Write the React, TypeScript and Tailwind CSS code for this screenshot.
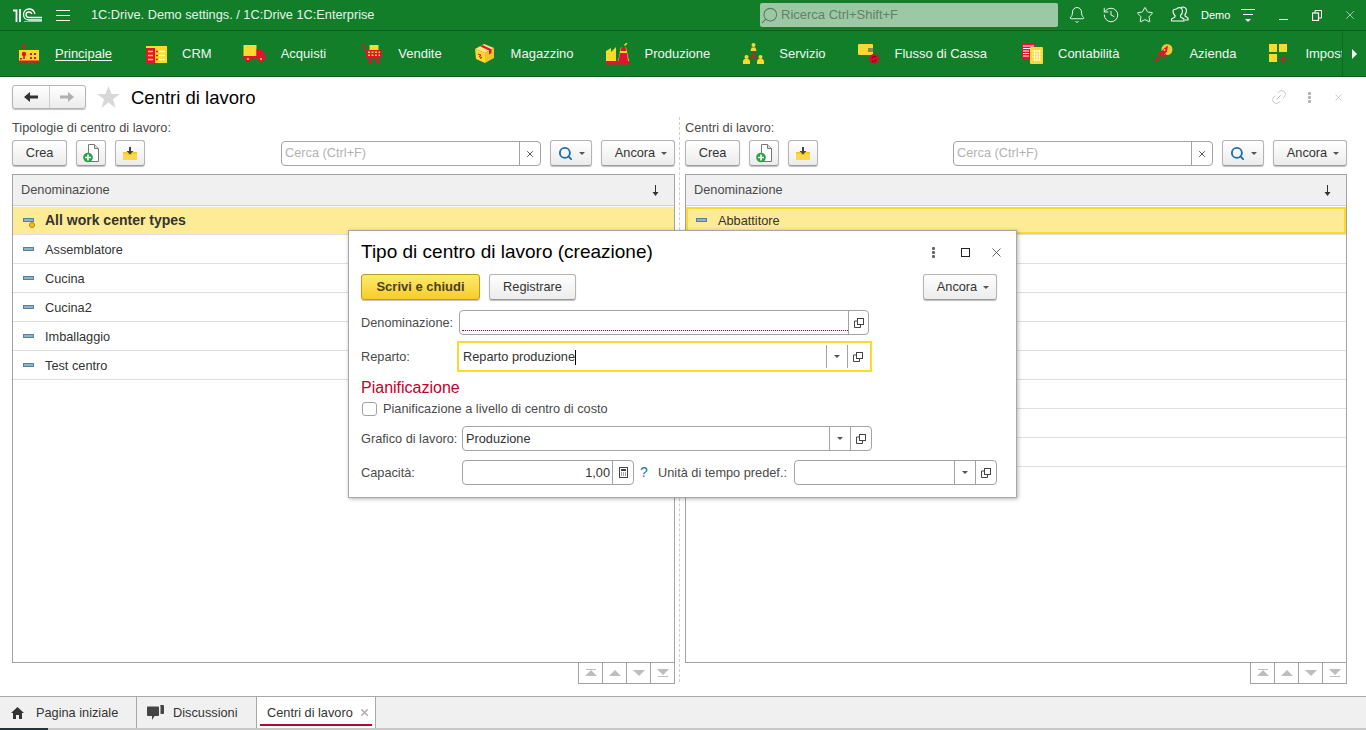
import type { ReactNode } from 'react'
import { Bell, History, Star, Link2, Search, X } from 'lucide-react'

const Y = '#fbd92d'
const R = '#e3122f'

const IconPrincipale = () => (
  <svg width="20" height="19" viewBox="0 0 20 19">
    <rect x="4.500" y="2" width="1" height="5" fill={R} />
    <circle cx="5" cy="1.500" r="1.500" fill={R} />
    <rect x="0" y="6" width="20" height="11" fill={Y} />
    <rect x="0" y="16.500" width="20" height="2" fill={R} />
    <circle cx="5" cy="10" r="2.200" fill={R} />
    <rect x="4.200" y="11" width="1.600" height="4" fill={R} />
    <rect x="1" y="14" width="2" height="1.500" fill={R} />
    <path d="M11 9h2v2h-2zM15 9h2v2h-2zM11 13h2v2h-2zM15 13h2v2h-2z" fill={R} />
  </svg>
)
const IconCrm = () => (
  <svg width="21" height="18" viewBox="0 0 21 18">
    <rect x="0" y="0" width="21" height="3" fill={Y} />
    <path d="M0 0h21v1H0z" fill={R} />
    <rect x="0" y="3" width="9" height="15" fill={R} />
    <rect x="9" y="3" width="12" height="15" fill={Y} />
    <path d="M2 6.500h5M2 10.500h5M2 14.500h5" stroke={Y} strokeWidth="1.500" />
    <path d="M10 6.500h2M10 10.500h2M10 14.500h2" stroke={R} strokeWidth="1.500" />
    <path d="M13 6.500h6M13 10.500h6M13 14.500h6" stroke="#fff" strokeWidth="1.300" />
  </svg>
)
const IconAcquisti = () => (
  <svg width="23" height="17" viewBox="0 0 23 17">
    <rect x="0.500" y="0" width="13" height="11" fill={Y} />
    <path d="M13.500 4h4l4.500 5v3h-8.500z" fill={R} />
    <rect x="0" y="11" width="23" height="2.500" fill={R} />
    <circle cx="5" cy="14" r="3" fill={R} /><circle cx="5" cy="14" r="1.100" fill={Y} />
    <circle cx="18" cy="14" r="3" fill={R} /><circle cx="18" cy="14" r="1.100" fill={Y} />
  </svg>
)
const IconVendite = () => (
  <svg width="20" height="19" viewBox="0 0 20 19">
    <rect x="7.500" y="1" width="9" height="6" fill={Y} />
    <path d="M0 0l2 .5L5.500 14h12" fill="none" stroke={R} strokeWidth="1.200" />
    <rect x="4" y="6" width="15.500" height="7" fill={R} />
    <path d="M6 7.500h2v1.500H6zM9.500 7.500h2v1.500h-2zM13 7.500h2v1.500h-2zM16.500 7.500h1.500v1.500H16.500zM6 10.500h2V12H6zM9.500 10.500h2V12h-2zM13 10.500h2V12h-2zM16.500 10.500h1.500V12H16.500z" fill={Y} />
    <circle cx="8" cy="17" r="2" fill={R} /><circle cx="15.500" cy="17" r="2" fill={R} />
  </svg>
)
const IconMagazzino = () => (
  <svg width="19" height="19" viewBox="0 0 19 19">
    <path d="M0 5l9-5 10 4-9 5z" fill="#fde47a" />
    <path d="M0 5l10 4v10L1 15z" fill={Y} />
    <path d="M10 9l9-5v10l-9 5z" fill="#eec529" />
    <path d="M5 2.200l9 4.300v4l2.500-1.500V5.200L7.500 1z" fill={R} />
    <path d="M3 10l3 1-2 1.500 3 1-2 1" stroke={R} strokeWidth="1" fill="none" />
  </svg>
)
const IconProduzione = () => (
  <svg width="24" height="22" viewBox="0 0 24 22">
    <path d="M0 18V8l5-3v4l5-5v14z" fill={Y} />
    <path d="M21 0l-2.500 2.500" stroke={Y} strokeWidth="1.500" />
    <path d="M15 4h5l3 14h-11z" fill={Y} />
    <path d="M15.500 4h4l.8 4h-5.600zM14 10h7l1 8H12.500z" fill={R} />
    <rect x="0" y="19" width="24" height="2.500" fill={R} />
  </svg>
)
const IconServizio = () => (
  <svg width="21" height="21" viewBox="0 0 21 21">
    <circle cx="10.500" cy="2" r="2" fill={Y} /><path d="M7.500 8l1-3.500h4l1 3.500z" fill={Y} />
    <circle cx="3.500" cy="14" r="2" fill={Y} /><path d="M0 21v-3.500l1.500-1.500h4l1.500 1.500V21z" fill={Y} />
    <circle cx="17.500" cy="14" r="2" fill={Y} /><path d="M14 21v-3.500l1.500-1.500h4l1.500 1.500V21z" fill={Y} />
    <path d="M10.500 9v4M10.500 13l-3.500 3M10.500 13l3.500 3" stroke={R} strokeWidth="1.300" />
  </svg>
)
const IconFlusso = () => (
  <svg width="21" height="20" viewBox="0 0 21 20">
    <rect x="0" y="0" width="15" height="11" rx="1" fill={Y} />
    <rect x="10" y="4" width="5" height="4" fill="#8b8a4a" />
    <circle cx="16" cy="15" r="5" fill="#d60f2c" />
    <path d="M14 15a2.500 2.500 0 0 1 4-2M18 15a2.500 2.500 0 0 1-4 2" stroke="#7d0a1c" strokeWidth="1.200" fill="none" />
  </svg>
)
const IconConta = () => (
  <svg width="21" height="21" viewBox="0 0 21 21">
    <rect x="0" y="0" width="13" height="16" fill={R} />
    <path d="M1 3h11M1 5.500h11M1 8h6M1 10.500h6M1 13h6" stroke="#fff" strokeWidth="1" />
    <rect x="8" y="4" width="13" height="17" rx="1" fill={Y} />
    <path d="M10 8h9M10 11h9M10 14h9M10 17h9M12.500 7v11M15 7v11M17.500 7v11" stroke="#fff" strokeWidth=".8" />
  </svg>
)
const IconAzienda = () => (
  <svg width="19" height="19" viewBox="0 0 19 19">
    <circle cx="13" cy="5.500" r="5.500" fill="#f2c735" />
    <path d="M14 1.500l-1 6-5 5.500-3-3 5-5.500z" fill={R} />
    <path d="M4 7h4l-3.500 4zM12 9v3.500L8 16zM3.500 12l2.500 2.500L0 19z" fill={R} />
    <circle cx="10.500" cy="6" r="1" fill={Y} />
  </svg>
)
const IconImpost = () => (
  <svg width="20" height="20" viewBox="0 0 20 20">
    <rect x="0" y="0" width="8" height="8" fill={Y} />
    <rect x="10" y="0" width="8" height="8" fill={Y} />
    <rect x="0" y="10" width="8" height="8" fill={Y} />
    <path d="M14 11v9M10 15.500h9" stroke={R} strokeWidth="1.300" />
  </svg>
)

const Logo1C = () => (
  <svg width="29" height="14" viewBox="0 0 29 14" fill="none" stroke="#fff">
    <path d="M0 2.500h3.500V14" strokeWidth="1.800" />
    <path d="M7 1V14" strokeWidth="1.800" />
    <path d="M22 6C21.200 3 19 1 16 1c-3.500 0-5.500 2.700-5.500 5.500 0 3 2.200 5.500 5.500 5.500h13" strokeWidth="1.300" />
    <path d="M19 6c-.5-1.200-1.700-2-3-2-1.800 0-3 1.200-3 2.700 0 1.500 1.300 2.800 3 2.800h13" strokeWidth="1.300" />
    <path d="M29 13.800H11" strokeWidth=".8" />
  </svg>
)

const menu: { label: string; icon: ReactNode; gap: string; active?: boolean }[] = [
  { label: 'Principale', icon: <IconPrincipale />, gap: 'mr-[32px]', active: true },
  { label: 'CRM', icon: <IconCrm />, gap: 'mr-[31px]' },
  { label: 'Acquisti', icon: <IconAcquisti />, gap: 'mr-[34px]' },
  { label: 'Vendite', icon: <IconVendite />, gap: 'mr-[31px]' },
  { label: 'Magazzino', icon: <IconMagazzino />, gap: 'mr-[33px]' },
  { label: 'Produzione', icon: <IconProduzione />, gap: 'mr-[31px]' },
  { label: 'Servizio', icon: <IconServizio />, gap: 'mr-[31px]' },
  { label: 'Flusso di Cassa', icon: <IconFlusso />, gap: 'mr-[33px]' },
  { label: 'Contabilità', icon: <IconConta />, gap: 'mr-[32px]' },
  { label: 'Azienda', icon: <IconAzienda />, gap: 'mr-[31px]' },
  { label: 'Impostazioni', icon: <IconImpost />, gap: '' },
]

const Caret = ({ className = '' }: { className?: string }) => (
  <span className={`inline-block w-0 h-0 border-x-[3px] border-x-transparent border-t-[3px] border-t-[#555] ${className}`} />
)

const OpenIcon = () => (
  <svg width="10" height="10" viewBox="0 0 10 10" fill="none" stroke="#444">
    <path d="M3 3H.5v6.500h6V7" />
    <rect x="3.500" y=".5" width="6" height="6" />
  </svg>
)

const Btn = ({ className = '', children }: { className?: string; children: ReactNode }) => (
  <div className={`flex items-center justify-center h-[26px] rounded-[3px] border border-[#b4b4b4] border-b-[#999] bg-gradient-to-b from-white to-[#ececec] shadow-[0_1px_1px_rgba(0,0,0,0.25)] text-[#333] ${className}`}>
    {children}
  </div>
)

const Field = ({ className = '', children }: { className?: string; children?: ReactNode }) => (
  <div className={`flex items-stretch h-[25px] rounded-[4px] border border-[#a3a3a3] bg-white ${className}`}>{children}</div>
)

const Side = ({ children, w = 'w-[21px]' }: { children: ReactNode; w?: string }) => (
  <div className={`flex items-center justify-center ${w} shrink-0 border-l border-[#a3a3a3]`}>{children}</div>
)

const AddIcon = () => (
  <svg width="17" height="19" viewBox="0 0 17 19">
    <path d="M5.500 .5h6l4 4v13h-10z" fill="#fff" stroke="#777" />
    <path d="M11.500 .5v4h4" fill="#ddd" stroke="#777" />
    <circle cx="5" cy="13.500" r="4.800" fill="#27a243" />
    <path d="M5 10.500v6M2 13.500h6" stroke="#fff" strokeWidth="1.600" />
  </svg>
)
const LoadIcon = () => (
  <svg width="14" height="13" viewBox="0 0 14 13">
    <rect x="0" y="5" width="14" height="8" fill="#fbd94a" />
    <path d="M0 5h4l1 3h4l1-3h4v1.500H0z" fill="#f0c419" />
    <path d="M7 0v4" stroke="#444" strokeWidth="2" />
    <path d="M3.500 4h7L7 7.500z" fill="#444" />
  </svg>
)

const ScrollIcon = ({ kind }: { kind: 'first' | 'up' | 'down' | 'last' }) => (
  <svg width="14" height="8" viewBox="0 0 14 8" fill="#bdbdbd">
    {kind === 'first' && <path d="M2 0h10v1H2zM7 1l6 6H1z" />}
    {kind === 'up' && <path d="M7 1l6 6H1z" />}
    {kind === 'down' && <path d="M1 1h12L7 7z" />}
    {kind === 'last' && <path d="M1 0h12L7 6zM2 7h10v1H2z" />}
  </svg>
)

const SortArrow = () => (
  <svg width="7" height="11" viewBox="0 0 7 11" fill="#333">
    <rect x="3" y="0" width="1" height="8" />
    <path d="M.5 7h6L3.500 11z" />
  </svg>
)

const RowIcon = ({ mark }: { mark?: boolean }) => (
  <span className="relative block w-[11px] h-[10px] shrink-0">
    <span className="absolute left-0 top-[2px] w-[11px] h-[4px] bg-[#8db4cf] border border-[#5b7f98]" />
    {mark && <span className="absolute left-[6px] top-[6px] w-[6px] h-[6px] rounded-full bg-[#f1c21b] border border-[#a98a10]" />}
  </span>
)

const Panel = ({ title, className, rows, boxed, bold }: { title: string; className: string; rows: string[]; boxed?: boolean; bold?: boolean }) => (
  <div className={`flex flex-col shrink-0 ${className}`}>
    <div className="h-[14px] mt-[12px] leading-[14px] text-[#4a4a4a]">{title}</div>
    <div className="flex items-start mt-[5px] h-[26px]">
      <Btn className="w-[55px]">Crea</Btn>
      <Btn className="w-[30px] ml-[9px]"><AddIcon /></Btn>
      <Btn className="w-[30px] ml-[9px]"><LoadIcon /></Btn>
      <Field className="w-[260px] ml-auto mt-[1px]">
        <div className="flex-1 px-[3px] leading-[22px] text-[#b3b3b3]">Cerca (Ctrl+F)</div>
        <Side><X size={10} color="#555" strokeWidth={2.4} /></Side>
      </Field>
      <Btn className="w-[42px] ml-[9px] gap-[6px]">
        <Search size={15} color="#1f6fa8" strokeWidth={3} />
        <Caret />
      </Btn>
      <Btn className="w-[74px] ml-[9px] gap-[6px] pl-[6px]">Ancora <Caret /></Btn>
    </div>
    <div className="mt-[8px] h-[489px] border border-[#a3a3a3] bg-white flex flex-col">
      <div className="flex items-center justify-between h-[31px] shrink-0 bg-[#f0f0f0] border-b border-[#d0d0d0] pl-[8px] pr-[15px] text-[#4a4a4a]">
        <span>Denominazione</span>
        <SortArrow />
      </div>
      <div className="h-[28px] shrink-0 mt-[1px] border-b border-[#dedede]">
        <div className={`flex items-center h-[27px] bg-[#feeb95] gap-[11px] text-[#333] ${boxed ? 'border-2 border-[#fbd92d] pl-[8px]' : 'pl-[10px]'} ${bold ? 'font-bold text-[14px]' : ''}`}>
          <RowIcon mark={bold} />
          <span>{rows[0]}</span>
        </div>
      </div>
      {rows.slice(1).map((row, i) => (
        <div key={i} className="flex items-center h-[29px] shrink-0 border-b border-[#dedede] pl-[10px] pt-[1px] gap-[11px] text-[#333]">
          <RowIcon />
          <span>{row}</span>
        </div>
      ))}
    </div>
    <div className="flex justify-end h-[22px]">
      {(['first', 'up', 'down', 'last'] as const).map((kind) => (
        <div key={kind} className="flex items-center justify-center w-[24px] last:w-[25px] h-[21px] border-b border-l last:border-r border-[#a3a3a3]">
          <ScrollIcon kind={kind} />
        </div>
      ))}
    </div>
  </div>
)

const Dots = ({ color }: { color: string }) => (
  <svg width="3" height="11" viewBox="0 0 3 11" fill={color}>
    <rect width="3" height="3" rx="1" /><rect y="4" width="3" height="3" rx="1" /><rect y="8" width="3" height="3" rx="1" />
  </svg>
)

const CalcIcon = () => (
  <svg width="9" height="11" viewBox="0 0 9 11">
    <rect x=".5" y=".5" width="8" height="10" fill="none" stroke="#444" />
    <rect x="2" y="2" width="5" height="2" fill="#444" />
    <path d="M2 5.500h1v1H2zM4 5.500h1v1H4zM6 5.500h1v1H6zM2 7.500h1v1H2zM4 7.500h1v1H4zM6 7.500h1v1H6z" fill="#444" />
  </svg>
)

const Dialog = () => (
  <div className="absolute left-[348px] top-[230px] w-[669px] h-[268px] bg-white border border-[#a8a8a8] shadow-[1px_1px_4px_rgba(0,0,0,0.3)] pl-[12px] pr-[19px] z-10">
    <div className="flex items-center h-[42px]">
      <span className="text-[19px] text-black flex-1">Tipo di centro di lavoro (creazione)</span>
      <Dots color="#666" />
      <span className="block w-[9px] h-[9px] border border-[#222] ml-[26px]" />
      <X size={15} color="#333" strokeWidth={1.2} className="ml-[19px] mr-[-7px]" />
    </div>
    <div className="flex items-center h-[26px] mt-[1px]">
      <div className="flex items-center justify-center w-[119px] h-[26px] rounded-[3px] border border-[#bd9c1a] bg-gradient-to-b from-[#fdea6b] to-[#f7cd1e] shadow-[0_1px_1px_rgba(0,0,0,0.25)] text-[13px] font-bold text-[#4a4320]">Scrivi e chiudi</div>
      <Btn className="w-[87px] ml-[9px] text-[#4a4a4a]">Registrare</Btn>
      <Btn className="w-[74px] ml-auto gap-[6px] pl-[6px]">Ancora <Caret /></Btn>
    </div>
    <div className="flex items-center h-[25px] mt-[10px]">
      <span className="w-[98px] whitespace-nowrap text-[#4a4a4a]">Denominazione:</span>
      <Field className="w-[410px]">
        <div className="flex-1 relative"><span className="absolute left-[2px] right-0 bottom-[3px] border-b border-dotted border-[#c00000]" /></div>
        <Side w="w-[20px]"><OpenIcon /></Side>
      </Field>
    </div>
    <div className="flex items-center h-[31px] mt-[6px]">
      <span className="w-[96px] text-[#4a4a4a]">Reparto:</span>
      <div className="flex items-center w-[415px] h-[31px] border-2 border-[#fbd92d] bg-white pr-[2px]">
        <span className="flex-1 pl-[4px] text-[#333]">Reparto produzione<span className="inline-block w-px h-[15px] bg-black align-middle" /></span>
        <div className="flex items-center justify-center w-[21px] h-[23px] border-l border-[#a3a3a3]"><Caret /></div>
        <div className="flex items-center justify-center w-[21px] h-[23px] border-l border-[#a3a3a3]"><OpenIcon /></div>
      </div>
    </div>
    <div className="h-[20px] leading-[20px] mt-[6px] text-[16px] text-[#c2002b]">Pianificazione</div>
    <div className="flex items-center h-[16px] mt-[3px]">
      <span className="block w-[15px] h-[14px] rounded-[3px] border border-[#a3a3a3] bg-white ml-[1px]" />
      <span className="ml-[6px] text-[#4a4a4a]">Pianificazione a livello di centro di costo</span>
    </div>
    <div className="flex items-center h-[25px] mt-[9px]">
      <span className="w-[101px] whitespace-nowrap text-[#4a4a4a]">Grafico di lavoro:</span>
      <Field className="w-[410px]">
        <span className="flex-1 pl-[3px] leading-[23px] text-[#333]">Produzione</span>
        <Side><Caret /></Side>
        <Side><OpenIcon /></Side>
      </Field>
    </div>
    <div className="flex items-center h-[25px] mt-[9px]">
      <span className="w-[101px] text-[#4a4a4a]">Capacità:</span>
      <Field className="w-[172px]">
        <span className="flex-1 pr-[2px] text-right leading-[23px] text-[#333]">1,00</span>
        <Side><CalcIcon /></Side>
      </Field>
      <span className="w-[24px] pl-[6px] text-[14px] text-[#1f6fa8]">?</span>
      <span className="w-[136px] whitespace-nowrap text-[#4a4a4a]">Unità di tempo predef.:</span>
      <Field className="w-[203px]">
        <span className="flex-1" />
        <Side><Caret /></Side>
        <Side><OpenIcon /></Side>
      </Field>
    </div>
  </div>
)

const UsersIcon = () => (
  <svg width="20" height="18" viewBox="0 0 20 18" fill="none" stroke="#fff" strokeWidth="1.100">
    <path d="M7.500 3c2-2.500 6-1.500 6 2 0 2-1 3.500-2 4.500v1.500l3.500 2v2H2.500v-2l3.500-2v-1.500c-1-1-2-2.500-2-4 0-1.500 1.500-2.500 3.500-2.500z" />
    <path d="M12 1.500c3-1.500 5.500.5 5.500 3 0 2-.8 3-1.500 4v1.500l3 2v2h-3" />
  </svg>
)

const TopBtn = ({ className = 'w-[34px]', children }: { className?: string; children: ReactNode }) => (
  <div className={`flex items-center justify-center shrink-0 ${className}`}>{children}</div>
)

const leftRows = ['All work center types', 'Assemblatore', 'Cucina', 'Cucina2', 'Imballaggio', 'Test centro']
const rightRows = ['Abbattitore', '', '', '', '', '', '', '', '']

export default function App() {
  return (
    <div className="relative flex flex-col w-[1366px] h-[730px] overflow-hidden bg-white text-[12.750px] font-['Liberation_Sans',Arial,sans-serif] text-[#333]">
      <header className="flex items-center h-[31px] shrink-0 bg-[#127e2a] border-b border-[#0c5d1c] text-white">
        <div className="ml-[13px] flex"><Logo1C /></div>
        <div className="ml-[14px] w-[14px] flex flex-col gap-[4px]">
          <span className="block h-px bg-white" /><span className="block h-px bg-white" /><span className="block h-px bg-white" />
        </div>
        <span className="ml-[21px] flex-1 text-[#e7f3e9]">1C:Drive. Demo settings. / 1C:Drive 1C:Enterprise</span>
        <div className="flex items-center w-[298px] h-[24px] rounded-[2px] bg-[#9cc9a4]">
          <Search size={19} color="#5d7a63" strokeWidth={1.300} className="-scale-x-100" />
          <span className="ml-[2px] text-[13px] text-[#64806a]">Ricerca Ctrl+Shift+F</span>
        </div>
        <TopBtn className="w-[34px] ml-[2px]"><Bell size={18} strokeWidth={1.200} /></TopBtn>
        <TopBtn><History size={18} strokeWidth={1.200} /></TopBtn>
        <TopBtn><Star size={18} strokeWidth={1.200} /></TopBtn>
        <TopBtn><UsersIcon /></TopBtn>
        <span className="ml-[5px] w-[27px] text-[11px] whitespace-nowrap">Demo</span>
        <TopBtn className="w-[34px] ml-[3px]">
          <div className="w-[14px] flex flex-col gap-[4px]">
            <span className="block h-px bg-white" /><span className="block h-px w-[10px] mx-auto bg-white" />
            <span className="block w-0 h-0 mx-auto border-x-[3px] border-x-transparent border-t-[3px] border-t-white" />
          </div>
        </TopBtn>
        <TopBtn className="w-[34px] ml-[1px]"><span className="block w-[9px] h-px bg-white mt-[9px]" /></TopBtn>
        <TopBtn>
          <svg width="10" height="11" viewBox="0 0 10 11" fill="none" stroke="#fff">
            <rect x=".5" y="3" width="6" height="7.500" strokeWidth="1.200" />
            <path d="M3 2.500V.5h6.500v7.500H7" />
          </svg>
        </TopBtn>
        <TopBtn className="w-[32px]"><X size={14} strokeWidth={1} /></TopBtn>
      </header>

      <nav className="relative flex items-center h-[46px] shrink-0 bg-[#127e2a] border-b border-[#0c5d1c] pl-[17px] text-[13px] text-[#eef7ef] overflow-hidden whitespace-nowrap">
        {menu.map((m) => (
          <div key={m.label} className={`flex items-center shrink-0 ${m.gap}`}>
            <span className="w-[24px] flex justify-center">{m.icon}</span>
            <span className={`ml-[14px] ${m.active ? 'underline underline-offset-2' : ''}`}>{m.label}</span>
          </div>
        ))}
        <div className="absolute right-0 top-0 bottom-0 w-[24px] bg-[#127e2a] border-l border-[#0e6a22] flex items-center pl-[9px]">
          <span className="w-0 h-0 border-y-[5px] border-y-transparent border-l-[5px] border-l-white" />
        </div>
      </nav>

      <div className="flex items-center h-[24px] mt-[8px] shrink-0 px-[12px]">
        <div className="flex items-center h-[24px] w-[74px] rounded-[3px] border border-[#b4b4b4] bg-gradient-to-b from-white to-[#ececec] shadow-[0_1px_1px_rgba(0,0,0,0.25)]">
          <div className="flex-1 flex justify-center border-r border-[#ccc] h-full items-center">
            <svg width="14" height="10" viewBox="0 0 14 10" fill="#333"><path d="M0 5l6-5v3.500h8v3H6V10z" /></svg>
          </div>
          <div className="flex-1 flex justify-center">
            <svg width="14" height="10" viewBox="0 0 14 10" fill="#b0b0b0"><path d="M14 5L8 0v3.500H0v3h8V10z" /></svg>
          </div>
        </div>
        <svg width="23" height="22" viewBox="0 0 23 22" fill="#d8d8d8" className="ml-[11px]">
          <path d="M11.500 0l3 8h8.500l-7 5.200L18.500 22l-7-5.500L4.500 22l2.500-8.800L0 8h8.500z" />
        </svg>
        <span className="ml-[11px] pt-[1px] text-[18.500px] text-black flex-1">Centri di lavoro</span>
        <Link2 size={18} color="#c4c4c4" strokeWidth={1.200} className="-rotate-45 mr-[20px]" />
        <Dots color="#b0b0b0" />
        <X size={11} color="#b0b0b0" strokeWidth={1.400} className="ml-[22px] mr-[10px]" />
      </div>

      <main className="flex flex-1 pl-[12px]">
        <Panel title="Tipologie di centro di lavoro:" className="w-[663px]" rows={leftRows} bold />
        <div className="w-[10px] shrink-0 flex pl-[4px] mt-[8px] h-[565px]">
          <span className="block border-l border-dashed border-[#cfcfcf]" />
        </div>
        <Panel title="Centri di lavoro:" className="w-[662px]" rows={rightRows} boxed />
      </main>

      <footer className="flex h-[34px] shrink-0 bg-[#f0f0f0] border-t border-[#a8a8a8] relative">
        <div className="flex items-center w-[137px] h-[31px] border-r border-[#a8a8a8] pl-[11px] gap-[12px]">
          <svg width="13" height="12" viewBox="0 0 13 12" fill="#333">
            <path d="M6.500 0L13 6h-2v6H8V8H5v4H2V6H0z" />
          </svg>
          <span>Pagina iniziale</span>
        </div>
        <div className="flex items-center w-[120px] h-[31px] border-r border-[#a8a8a8] pl-[10px] gap-[9px]">
          <svg width="17" height="16" viewBox="0 0 17 16" fill="#444">
            <path d="M0 2.500a1 1 0 0 1 1-1h10a1 1 0 0 1 1 1V10a1 1 0 0 1-1 1H7.500L5 15v-4H1a1 1 0 0 1-1-1z" />
            <path d="M13 0h3a1 1 0 0 1 1 1v7a1 1 0 0 1-1 1h-2.500V1.500A1.500 1.500 0 0 0 13 0z" />
          </svg>
          <span>Discussioni</span>
        </div>
        <div className="relative flex items-center w-[119px] h-[31px] bg-white border-r border-[#a8a8a8] pl-[10px]">
          <span>Centri di lavoro</span>
          <X size={11} color="#aaa" strokeWidth={3} className="ml-[6px]" />
          <span className="absolute left-[3px] right-[3px] bottom-[2px] h-[2px] bg-[#b00a30]" />
        </div>
        <div className="absolute left-0 right-0 bottom-0 h-[2px] flex">
          <span className="w-[48px] bg-[#22333f]" />
          <span className="flex-1 bg-[#c8c8c8]" />
        </div>
      </footer>

      <Dialog />
    </div>
  )
}
